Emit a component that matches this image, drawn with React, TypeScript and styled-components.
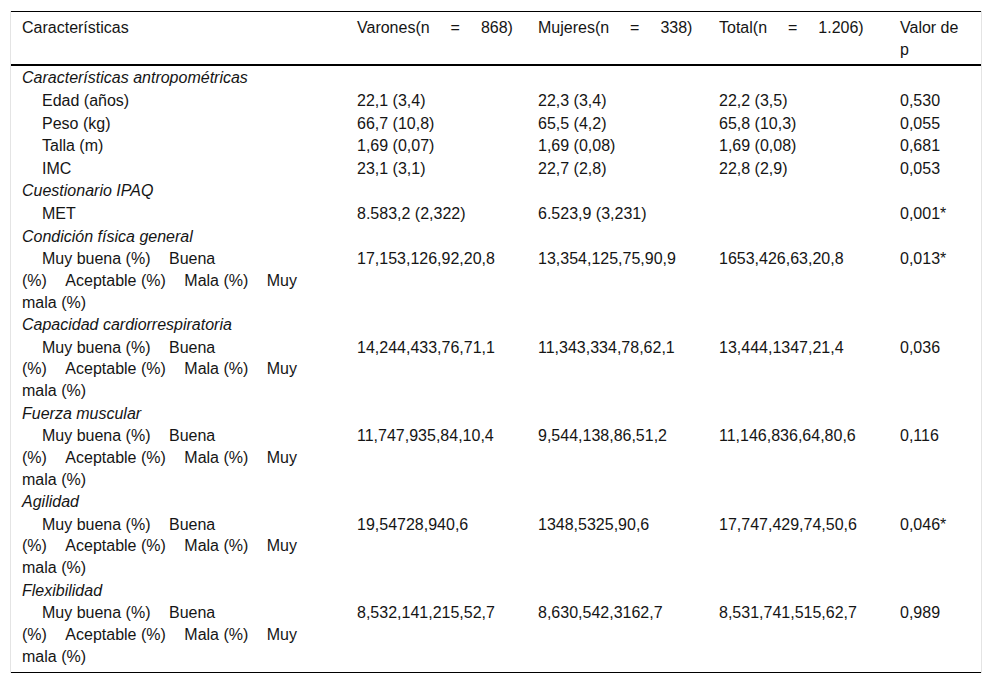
import React from "react";
import styled, { createGlobalStyle } from "styled-components";

const Global = createGlobalStyle`
  html, body { margin: 0; padding: 0; background: #ffffff; }
  body { font-family: "Liberation Sans", Arial, sans-serif; color: #151515; }
`;

const Page = styled.div`
  padding: 11px 10px 0 10px;
`;

const Frame = styled.div`
  width: 972px;
  border-left: 1px solid #e4e4e4;
  border-right: 1px solid #e4e4e4;
  box-sizing: border-box;
`;

const Table = styled.table`
  width: 100%;
  border-collapse: collapse;
  table-layout: fixed;
  font-size: 16px;
  line-height: 21.62px;
  border-top: 1px solid #000;
  border-bottom: 1px solid #000;
`;

const HeadCell = styled.th`
  text-align: left;
  font-weight: normal;
  vertical-align: top;
  padding: 5px 11px 4px 11px;
  border-bottom: 2px solid #000;
`;

const Cell = styled.td<{ $last?: boolean }>`
  vertical-align: top;
  padding: 1px 11px ${(p) => (p.$last ? "5px" : "0")} 11px;
`;

const Category = styled.span`
  font-style: italic;
`;

const Sub = styled.span`
  padding-left: 20px;
`;

const Level = styled.span<{ $first?: boolean }>`
  padding-left: ${(p) => (p.$first ? "20px" : "14px")};
`;

const Gap = styled.span`
  display: inline-block;
  width: 16.5px;
`;

type Row =
  | { kind: "cat"; label: string }
  | { kind: "sub"; label: string; v: [string, string, string, string] }
  | { kind: "levels"; v: [string, string, string, string] };

const rows: Row[] = [
  { kind: "cat", label: "Características antropométricas" },
  { kind: "sub", label: "Edad (años)", v: ["22,1 (3,4)", "22,3 (3,4)", "22,2 (3,5)", "0,530"] },
  { kind: "sub", label: "Peso (kg)", v: ["66,7 (10,8)", "65,5 (4,2)", "65,8 (10,3)", "0,055"] },
  { kind: "sub", label: "Talla (m)", v: ["1,69 (0,07)", "1,69 (0,08)", "1,69 (0,08)", "0,681"] },
  { kind: "sub", label: "IMC", v: ["23,1 (3,1)", "22,7 (2,8)", "22,8 (2,9)", "0,053"] },
  { kind: "cat", label: "Cuestionario IPAQ" },
  { kind: "sub", label: "MET", v: ["8.583,2 (2,322)", "6.523,9 (3,231)", "", "0,001*"] },
  { kind: "cat", label: "Condición física general" },
  { kind: "levels", v: ["17,153,126,92,20,8", "13,354,125,75,90,9", "1653,426,63,20,8", "0,013*"] },
  { kind: "cat", label: "Capacidad cardiorrespiratoria" },
  { kind: "levels", v: ["14,244,433,76,71,1", "11,343,334,78,62,1", "13,444,1347,21,4", "0,036"] },
  { kind: "cat", label: "Fuerza muscular" },
  { kind: "levels", v: ["11,747,935,84,10,4", "9,544,138,86,51,2", "11,146,836,64,80,6", "0,116"] },
  { kind: "cat", label: "Agilidad" },
  { kind: "levels", v: ["19,54728,940,6", "1348,5325,90,6", "17,747,429,74,50,6", "0,046*"] },
  { kind: "cat", label: "Flexibilidad" },
  { kind: "levels", v: ["8,532,141,215,52,7", "8,630,542,3162,7", "8,531,741,515,62,7", "0,989"] },
];

const Levels = () => (
  <>
    <Level $first>Muy buena (%)</Level> <Level>Buena<br />(%)</Level>{" "}
    <Level>Aceptable (%)</Level> <Level>Mala (%)</Level>{" "}
    <Level>Muy<br />mala (%)</Level>
  </>
);

const NHeader = ({ name, n }: { name: string; n: string }) => (
  <>
    {name}(n<Gap /> =<Gap /> {n})
  </>
);

export default function App() {
  return (
    <Page>
      <Global />
      <Frame>
        <Table>
          <colgroup>
            <col style={{ width: 335 }} />
            <col style={{ width: 181 }} />
            <col style={{ width: 181 }} />
            <col style={{ width: 181 }} />
            <col />
          </colgroup>
          <thead>
            <tr>
              <HeadCell>Características</HeadCell>
              <HeadCell><NHeader name="Varones" n="868" /></HeadCell>
              <HeadCell><NHeader name="Mujeres" n="338" /></HeadCell>
              <HeadCell><NHeader name="Total" n="1.206" /></HeadCell>
              <HeadCell>Valor de p</HeadCell>
            </tr>
          </thead>
          <tbody>
            {rows.map((r, i) => {
              const last = i === rows.length - 1;
              if (r.kind === "cat") {
                return (
                  <tr key={i}>
                    <Cell $last={last}><Category>{r.label}</Category></Cell>
                    <Cell $last={last} />
                    <Cell $last={last} />
                    <Cell $last={last} />
                    <Cell $last={last} />
                  </tr>
                );
              }
              return (
                <tr key={i}>
                  <Cell $last={last}>
                    {r.kind === "sub" ? <Sub>{r.label}</Sub> : <Levels />}
                  </Cell>
                  {r.v.map((v, j) => (
                    <Cell key={j} $last={last}>{v}</Cell>
                  ))}
                </tr>
              );
            })}
          </tbody>
        </Table>
      </Frame>
    </Page>
  );
}
